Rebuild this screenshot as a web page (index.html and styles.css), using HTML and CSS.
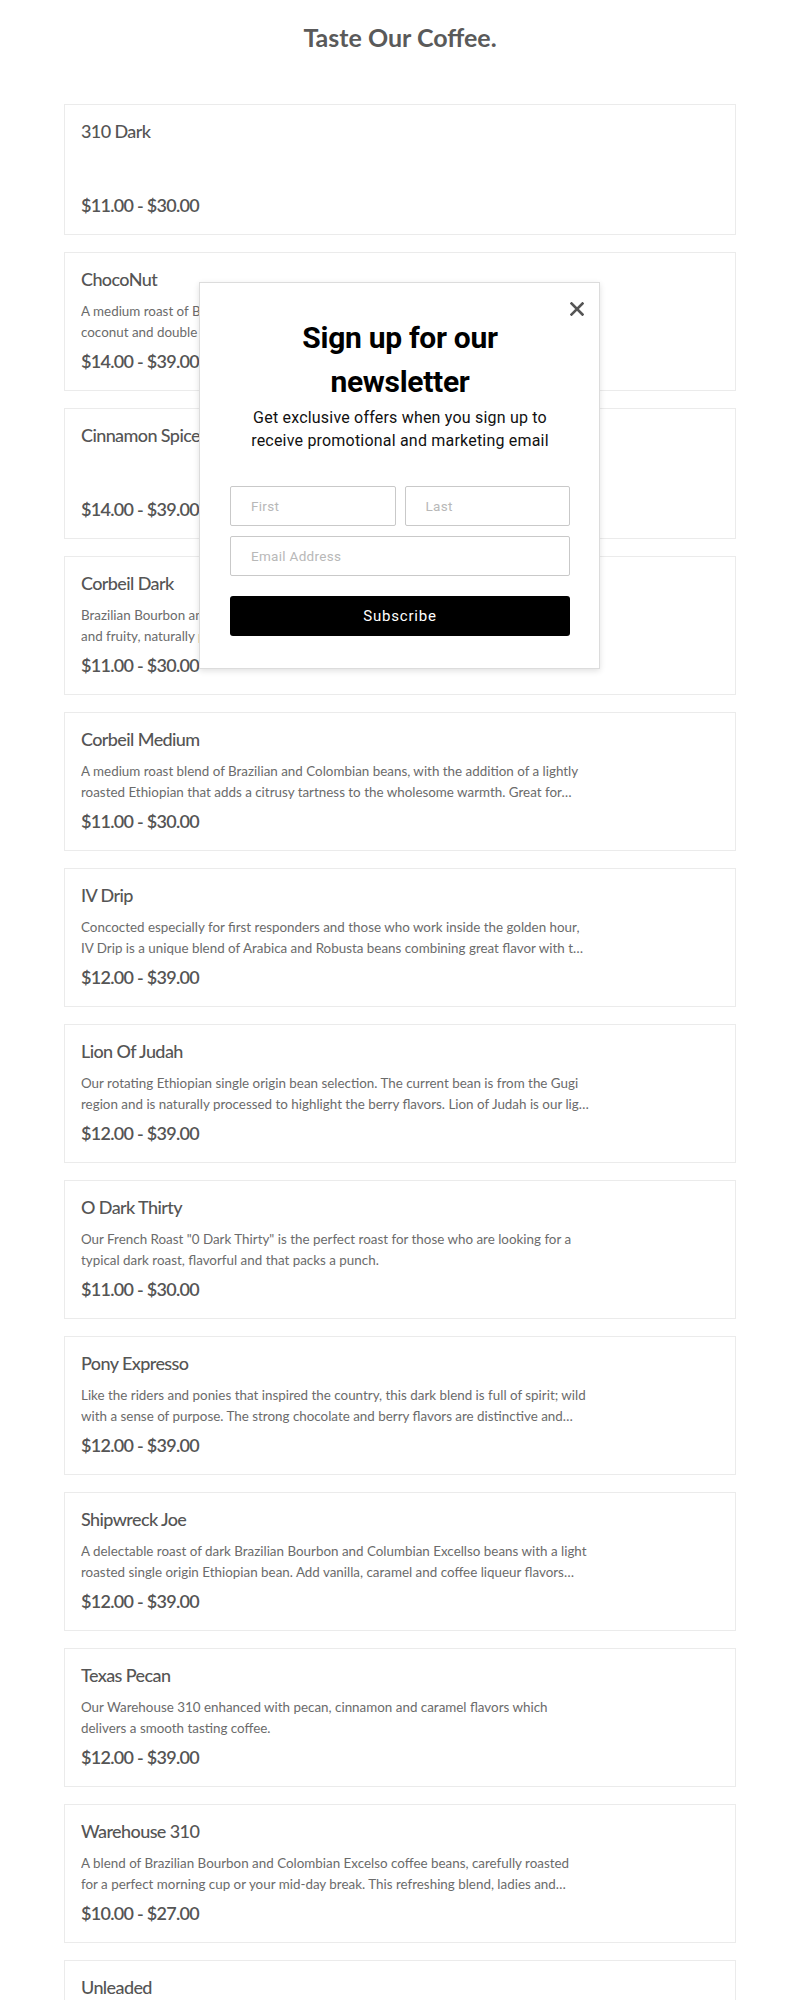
FILE: index.html
```html
<!DOCTYPE html>
<html lang="en">
<head>
<meta charset="utf-8">
<title>Taste Our Coffee.</title>
<link rel="stylesheet" href="styles.css">
</head>
<body>
<h1 class="page-title">Taste Our Coffee.</h1>
<div class="products">
  <div class="card">
    <h3 class="card-title">310 Dark</h3>
    <p class="card-desc empty"></p>
    <div class="card-price">$11.00 - $30.00</div>
  </div>
  <div class="card">
    <h3 class="card-title">ChocoNut</h3>
    <p class="card-desc">A medium roast of Brazilian and Colombian beans blended with toasted<br>coconut and double chocolate flavors for a rich and sweet cup of…</p>
    <div class="card-price">$14.00 - $39.00</div>
  </div>
  <div class="card">
    <h3 class="card-title">Cinnamon Spice</h3>
    <p class="card-desc empty"></p>
    <div class="card-price">$14.00 - $39.00</div>
  </div>
  <div class="card">
    <h3 class="card-title">Corbeil Dark</h3>
    <p class="card-desc">Brazilian Bourbon and Colombian beans with an Ethiopian bean, bright<br>and fruity, naturally processed for a bold and smooth finish in…</p>
    <div class="card-price">$11.00 - $30.00</div>
  </div>
  <div class="card">
    <h3 class="card-title">Corbeil Medium</h3>
    <p class="card-desc">A medium roast blend of Brazilian and Colombian beans, with the addition of a lightly<br>roasted Ethiopian that adds a citrusy tartness to the wholesome warmth. Great for…</p>
    <div class="card-price">$11.00 - $30.00</div>
  </div>
  <div class="card">
    <h3 class="card-title">IV Drip</h3>
    <p class="card-desc">Concocted especially for first responders and those who work inside the golden hour,<br>IV Drip is a unique blend of Arabica and Robusta beans combining great flavor with t…</p>
    <div class="card-price">$12.00 - $39.00</div>
  </div>
  <div class="card">
    <h3 class="card-title">Lion Of Judah</h3>
    <p class="card-desc">Our rotating Ethiopian single origin bean selection. The current bean is from the Gugi<br>region and is naturally processed to highlight the berry flavors. Lion of Judah is our lig…</p>
    <div class="card-price">$12.00 - $39.00</div>
  </div>
  <div class="card">
    <h3 class="card-title">O Dark Thirty</h3>
    <p class="card-desc">Our French Roast "0 Dark Thirty" is the perfect roast for those who are looking for a<br>typical dark roast, flavorful and that packs a punch.</p>
    <div class="card-price">$11.00 - $30.00</div>
  </div>
  <div class="card">
    <h3 class="card-title">Pony Expresso</h3>
    <p class="card-desc">Like the riders and ponies that inspired the country, this dark blend is full of spirit; wild<br>with a sense of purpose. The strong chocolate and berry flavors are distinctive and…</p>
    <div class="card-price">$12.00 - $39.00</div>
  </div>
  <div class="card">
    <h3 class="card-title">Shipwreck Joe</h3>
    <p class="card-desc">A delectable roast of dark Brazilian Bourbon and Columbian Excellso beans with a light<br>roasted single origin Ethiopian bean. Add vanilla, caramel and coffee liqueur flavors…</p>
    <div class="card-price">$12.00 - $39.00</div>
  </div>
  <div class="card">
    <h3 class="card-title">Texas Pecan</h3>
    <p class="card-desc">Our Warehouse 310 enhanced with pecan, cinnamon and caramel flavors which<br>delivers a smooth tasting coffee.</p>
    <div class="card-price">$12.00 - $39.00</div>
  </div>
  <div class="card">
    <h3 class="card-title">Warehouse 310</h3>
    <p class="card-desc">A blend of Brazilian Bourbon and Colombian Excelso coffee beans, carefully roasted<br>for a perfect morning cup or your mid-day break. This refreshing blend, ladies and…</p>
    <div class="card-price">$10.00 - $27.00</div>
  </div>
  <div class="card">
    <h3 class="card-title">Unleaded</h3>
    <p class="card-desc empty"></p>
    <div class="card-price">$14.00 - $39.00</div>
  </div>
</div>

<div class="modal">
  <button class="modal-close" aria-label="Close">
    <svg width="14" height="14" viewBox="0 0 14 14"><path d="M1.5 1.5 L12.5 12.5 M12.5 1.5 L1.5 12.5" stroke="#555" stroke-width="2.6" stroke-linecap="square"/></svg>
  </button>
  <h2 class="modal-title">Sign up for our<br>newsletter</h2>
  <p class="modal-text">Get exclusive offers when you sign up to<br>receive promotional and marketing email</p>
  <form class="modal-form">
    <div class="name-row">
      <input class="field" type="text" placeholder="First">
      <input class="field" type="text" placeholder="Last">
    </div>
    <input class="field" type="email" placeholder="Email Address">
    <button class="subscribe" type="button">Subscribe</button>
  </form>
</div>
</body>
</html>
```

FILE: styles.css
```css
html, body {
  margin: 0;
  padding: 0;
  background: #fff;
}

body {
  font-family: Lato, "Liberation Sans", sans-serif;
  color: #555;
  position: relative;
}

.page-title {
  margin: 0;
  padding-top: 21px;
  text-align: center;
  font-size: 25px;
  line-height: 32px;
  font-weight: 700;
  color: #5a5a5a;
  letter-spacing: 0;
}

.products {
  margin: 51px 64px 0;
  display: flex;
  flex-direction: column;
  gap: 17px;
}

.card {
  border: 1px solid #ebebeb;
  padding: 14px 16px 17px;
}

.card-title {
  margin: 0;
  font-size: 18px;
  line-height: 24px;
  font-weight: 500;
  color: #555;
  letter-spacing: -0.6px;
}

.card-desc {
  margin: 10px 0 6px;
  height: 42px;
  font-size: 13.4px;
  line-height: 21px;
  color: #6b6b6b;
  white-space: nowrap;
  letter-spacing: 0;
  overflow: hidden;
}

.card-desc.empty {
  height: 34px;
}

.card-price {
  font-size: 18px;
  line-height: 24px;
  font-weight: 600;
  color: #555;
  letter-spacing: -0.7px;
}

/* Newsletter popup */
.modal {
  position: absolute;
  top: 282px;
  left: 199px;
  width: 401px;
  box-sizing: border-box;
  background: #fff;
  border: 1px solid #dcdcdc;
  box-shadow: 0 2px 6px rgba(0, 0, 0, 0.12);
  padding: 33px 29px 32px 30px;
  text-align: center;
  font-family: Roboto, "Liberation Sans", sans-serif;
}

.modal-close {
  position: absolute;
  top: 19px;
  right: 15px;
  width: 14px;
  height: 14px;
  padding: 0;
  border: 0;
  background: none;
  display: flex;
}

.modal-title {
  margin: 0;
  font-size: 30px;
  line-height: 44px;
  font-weight: 700;
  color: #000;
  letter-spacing: -0.3px;
}

.modal-text {
  margin: 2px 0 0;
  font-size: 16px;
  line-height: 23.4px;
  color: #111;
  letter-spacing: 0.2px;
}

.modal-form {
  margin-top: 33px;
  display: flex;
  flex-direction: column;
  gap: 10px;
}

.name-row {
  display: grid;
  grid-template-columns: 1fr 1fr;
  gap: 9px;
}

.field {
  box-sizing: border-box;
  width: 100%;
  height: 40px;
  margin: 0;
  padding: 0 20px;
  border: 1px solid #c9c9c9;
  border-radius: 2px;
  font-family: Roboto, "Liberation Sans", sans-serif;
  font-size: 13.5px;
  color: #333;
  background: #fff;
}

.field::placeholder {
  color: #b8b8b8;
  letter-spacing: 0.3px;
}

.subscribe {
  margin-top: 10px;
  height: 40px;
  border: 0;
  border-radius: 3px;
  background: #000;
  color: #fff;
  font-family: Roboto, "Liberation Sans", sans-serif;
  font-size: 15px;
  letter-spacing: 0.8px;
}
```
